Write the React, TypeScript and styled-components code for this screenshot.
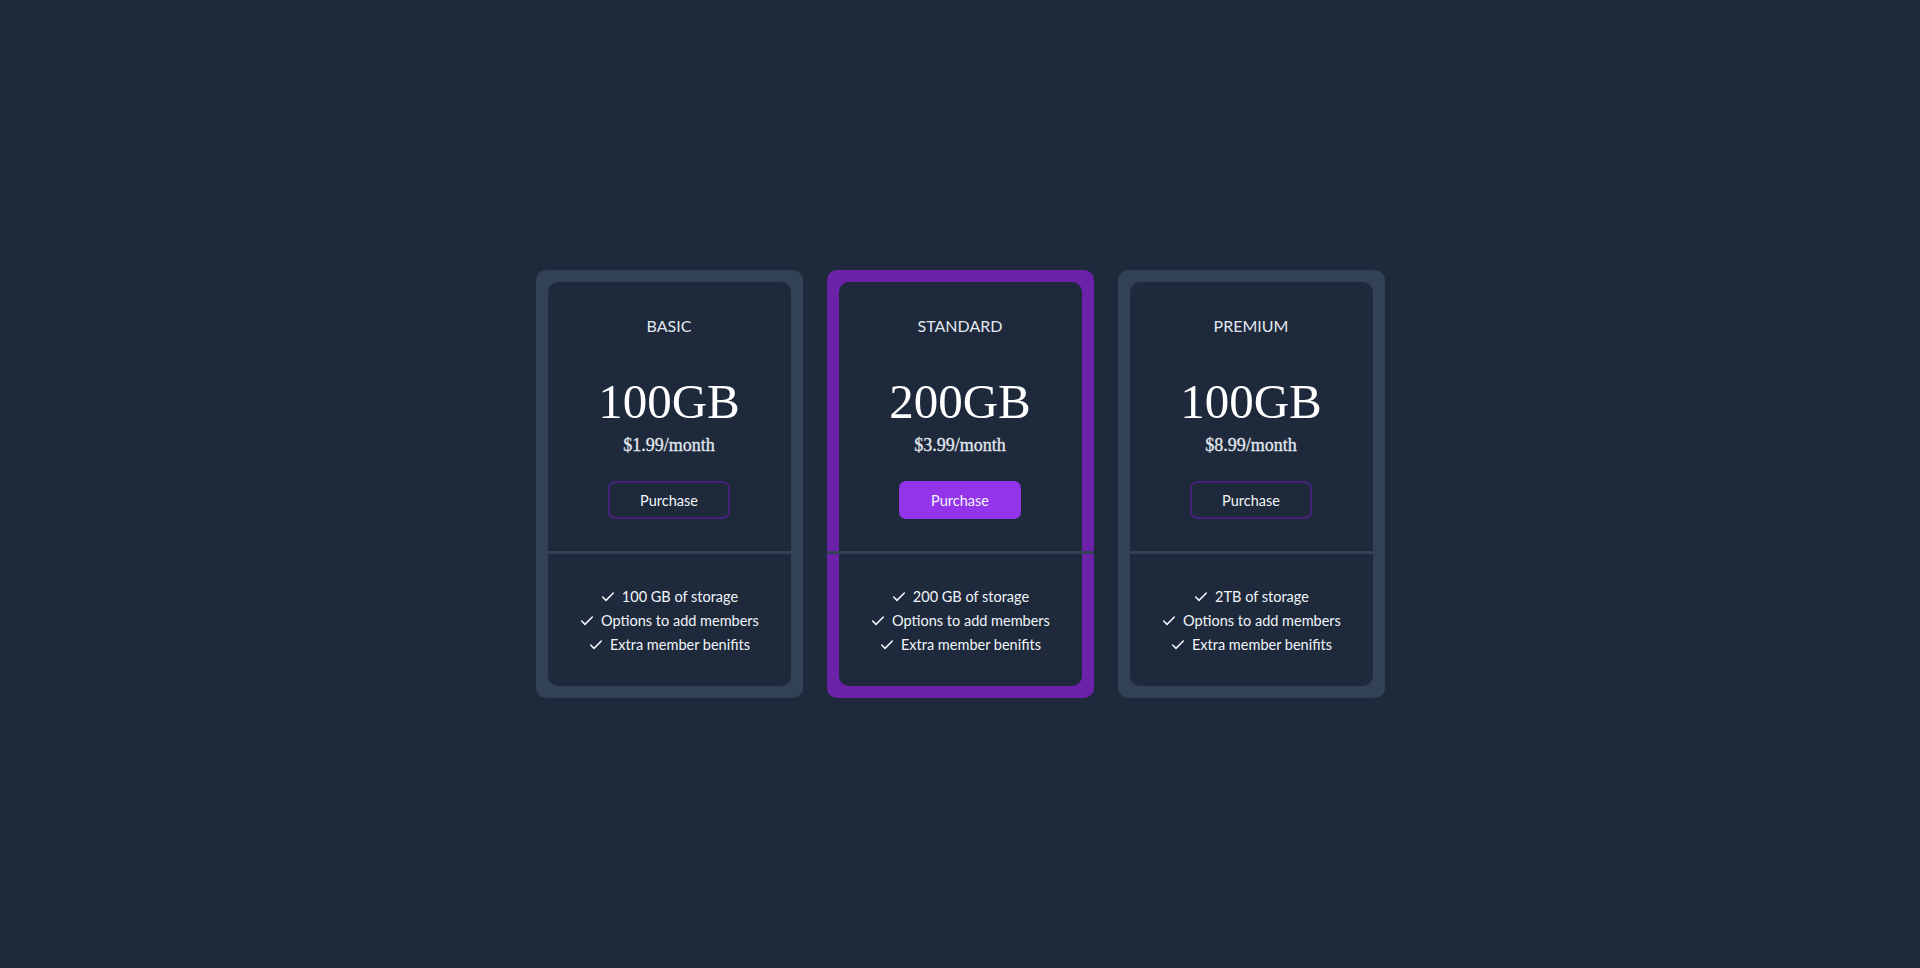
import { createGlobalStyle, styled } from 'styled-components';
import { Check } from 'lucide-react';

const GlobalStyle = createGlobalStyle`
  html, body {
    margin: 0;
    padding: 0;
    background: #1e293b;
  }
  body {
    font-family: Lato, "Noto Sans", sans-serif;
    color: #f1f5f9;
  }
`;

type Plan = {
  name: string;
  size: string;
  price: string;
  features: string[];
  featured?: boolean;
};

const plans: Plan[] = [
  {
    name: 'BASIC',
    size: '100GB',
    price: '$1.99/month',
    features: ['100 GB of storage', 'Options to add members', 'Extra member benifits'],
  },
  {
    name: 'STANDARD',
    size: '200GB',
    price: '$3.99/month',
    features: ['200 GB of storage', 'Options to add members', 'Extra member benifits'],
    featured: true,
  },
  {
    name: 'PREMIUM',
    size: '100GB',
    price: '$8.99/month',
    features: ['2TB of storage', 'Options to add members', 'Extra member benifits'],
  },
];

export default function App() {
  return (
    <>
      <GlobalStyle />
      <Page>
        <Cards>
          {plans.map((plan) => (
            <Card key={plan.name} $featured={plan.featured}>
              <Top>
                <Title>{plan.name}</Title>
                <Size>{plan.size}</Size>
                <Price>{plan.price}</Price>
                <Button $featured={plan.featured}>Purchase</Button>
              </Top>
              <Divider />
              <Bottom>
                {plan.features.map((f) => (
                  <Feature key={f}>
                    <Check size={16} strokeWidth={2.3} />
                    <span>{f}</span>
                  </Feature>
                ))}
              </Bottom>
            </Card>
          ))}
        </Cards>
      </Page>
    </>
  );
}

const Page = styled.div`
  min-height: 968px;
  display: flex;
  align-items: center;
  justify-content: center;
`;

const Cards = styled.div`
  display: flex;
  gap: 24px;
`;

const Card = styled.div<{ $featured?: boolean }>`
  width: 267px;
  box-sizing: border-box;
  padding: 12px;
  border-radius: 10px;
  background: ${(p) => (p.$featured ? '#6b21a8' : '#334155')};
  display: flex;
  flex-direction: column;
`;

const Top = styled.div`
  background: #1e293b;
  border-radius: 10px 10px 0 0;
  padding: 32px 0 32px;
  display: flex;
  flex-direction: column;
  align-items: center;
`;

const Title = styled.div`
  font-size: 16px;
  line-height: 24px;
  color: #e2e8f0;
`;

const Size = styled.div`
  margin-top: 36px;
  font-family: "Liberation Serif", "DejaVu Serif", serif;
  font-size: 49px;
  line-height: 56px;
  color: #ffffff;
`;

const Price = styled.div`
  margin-top: 1px;
  font-family: "Liberation Serif", "DejaVu Serif", serif;
  font-size: 18px;
  line-height: 28px;
  color: #e2e8f0;
  -webkit-text-stroke: 0.3px #e2e8f0;
`;

const Button = styled.button<{ $featured?: boolean }>`
  margin-top: 22px;
  width: 122px;
  height: 38px;
  box-sizing: border-box;
  border-radius: 7px;
  font-family: Lato, "Noto Sans", sans-serif;
  font-size: 14.5px;
  color: #f1f5f9;
  cursor: pointer;
  background: ${(p) => (p.$featured ? '#9333ea' : 'transparent')};
  border: 2px solid ${(p) => (p.$featured ? '#9333ea' : '#46217a')};
`;

const Divider = styled.div`
  height: 3px;
  margin: 0 -12px;
  background: #334155;
`;

const Bottom = styled.div`
  background: #1e293b;
  border-radius: 0 0 10px 10px;
  padding: 31px 0 29px;
  display: flex;
  flex-direction: column;
  align-items: center;
`;

const Feature = styled.div`
  display: flex;
  align-items: center;
  gap: 6px;
  font-size: 14.5px;
  line-height: 24px;
  color: #f1f5f9;
`;
